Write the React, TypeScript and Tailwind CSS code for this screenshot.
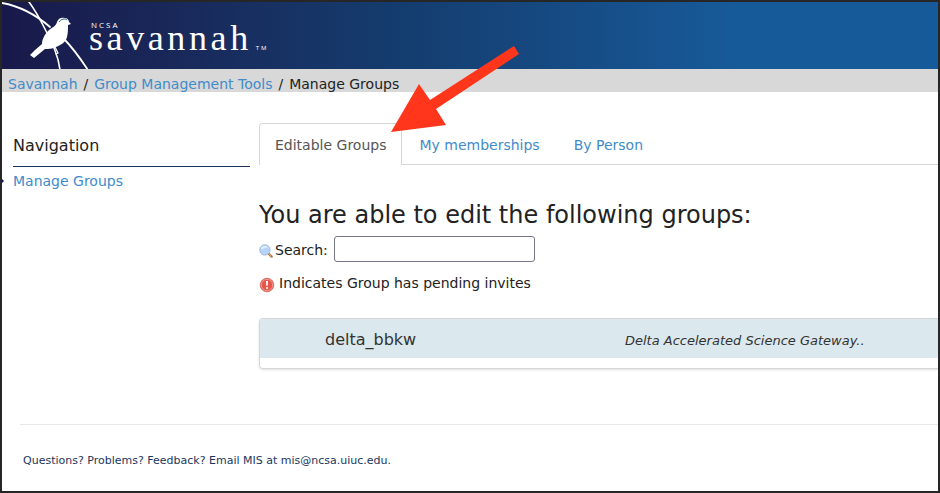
import React from "react";

function BirdLogo() {
  return (
    <svg viewBox="0 0 86 67" className="h-[67px] w-[86px] shrink-0" aria-hidden="true">
      <g fill="none" stroke="#fff" strokeLinecap="round">
        <path d="M0 1 C17 4 33 12 48 25" strokeWidth="1.8" />
        <path d="M62 37 C70 45 78 56 86 68" strokeWidth="1.8" />
        <path d="M27 0 C33 8 38 17 43 27 C50 41 56 52 58 68" strokeWidth="1.6" />
        <path d="M53 45 L56 51 L54 52" strokeWidth="1.2" />
      </g>
      <path
        d="M28 53 L33 48 L40 42 C40 37 43 32 47 28 C51 25 54 24 55 20 C56 16 60 15 63 16 C65 16 67 18 67 20 L69 22 L66 23 C66 27 66 31 65 35 C64 40 59 43 54 45 C50 47 46 47 43 47 L32 56 Z"
        fill="#fff"
      />
      <path d="M57 20 C59 17 63 16 65 18" fill="none" stroke="#2b6670" strokeWidth="1" />
    </svg>
  );
}

function MagnifierIcon() {
  return (
    <svg viewBox="0 0 14 14" className="mt-[3px] h-[14px] w-[14px]" aria-hidden="true">
      <path d="M10 10 L12.6 12.6" stroke="#b07c40" strokeWidth="2.4" strokeLinecap="round" />
      <path d="M10 10 L12.4 12" stroke="#e2b26c" strokeWidth="0.9" />
      <circle cx="5.9" cy="5.9" r="5.2" fill="#b5d4fa" stroke="#9db4dc" strokeWidth="0.9" />
      <path d="M2.3 5.7 A3.6 3.6 0 0 1 9 3.6 C6.5 4 4.5 4.7 2.3 5.7Z" fill="#e0eeff" />
    </svg>
  );
}

function AlertIcon() {
  return (
    <svg viewBox="0 0 16 16" className="mt-[3px] h-4 w-4" aria-hidden="true">
      <circle cx="8" cy="8" r="6.8" fill="#e4574a" stroke="#d3655b" strokeWidth="0.8" />
      <circle cx="8" cy="8" r="5.7" fill="none" stroke="#f3a79f" strokeWidth="0.8" />
      <path d="M7 4 h2 l-.3 4.8 h-1.4Z" fill="#fff" />
      <circle cx="8" cy="11" r="1" fill="#fff" />
    </svg>
  );
}

export default function App() {
  return (
    <div className="relative flex min-h-screen flex-col overflow-hidden border-2 border-[#262626] bg-white font-['DejaVu_Sans',Verdana,sans-serif] text-sm text-[#222]">
      <header className="flex h-[67px] items-start bg-linear-to-r from-[#18194a] from-0% via-[#143c6e] via-42% to-[#175a99] to-78%">
        <BirdLogo />
        <div className="flex flex-col pt-[19px] text-white">
          <span className="pl-[3px] font-['Open_Sans',sans-serif] text-[8px] leading-[8px] tracking-[2px]">NCSA</span>
          <div className="flex items-baseline">
            <span className="pl-px font-['Liberation_Serif',serif] text-[36px] leading-[18px] tracking-widest">savannah</span>
            <span className="ml-1 font-['Open_Sans',sans-serif] text-[6px] leading-[6px] tracking-[2px]">TM</span>
          </div>
        </div>
      </header>

      <nav aria-label="Breadcrumb" className="flex h-[23px] items-center gap-[6px] bg-[#d8d8d8] px-[6px] pt-[7px]">
        <a href="#home" className="text-[#428bca]">Savannah</a>
        <span>/</span>
        <a href="#tools" className="text-[#428bca]">Group Management Tools</a>
        <span>/</span>
        <span>Manage Groups</span>
      </nav>

      <div className="flex pt-[31px]">
        <aside className="w-[248px] shrink-0">
          <h2 className="ml-[11px] border-b border-[#1a365d] pt-[10px] pb-2 text-base leading-[25px]">Navigation</h2>
          <div className="flex items-center">
            <span className="h-0 w-0 border-y-2 border-l-2 border-y-transparent border-l-[#10106a]" />
            <a href="#groups" className="ml-[9px] leading-7 text-[#428bca]">Manage Groups</a>
          </div>
        </aside>

        <main className="ml-[9px] min-w-0 flex-1">
          <div role="tablist" className="flex border-b border-[#d6d6d6]">
            <button role="tab" aria-selected="true" className="-mb-px h-[42px] rounded-t border border-b-0 border-[#d6d6d6] bg-white px-[15px] text-[#555]">Editable Groups</button>
            <button role="tab" aria-selected="false" className="h-[41px] px-[17px] pt-[2px] text-[#428bca]">My memberships</button>
            <button role="tab" aria-selected="false" className="h-[41px] px-[17px] pt-[2px] text-[#428bca]">By Person</button>
          </div>

          <h1 className="pt-[34px] text-2xl leading-[32px]">You are able to edit the following groups:</h1>
          <div className="flex items-center pt-[5px]">
            <MagnifierIcon />
            <label htmlFor="search" className="ml-[2px] pt-[2px]">Search:</label>
            <input id="search" type="text" className="ml-[6px] h-[26px] w-[201px] rounded-[3px] border border-[#76768a] px-2" />
          </div>
          <p className="flex items-center gap-1 pt-[11px] leading-5">
            <AlertIcon />
            Indicates Group has pending invites
          </p>

          <section className="mt-[25px] rounded-l border border-r-0 border-[#d6d6d6] pb-[10px] shadow-sm">
            <div className="flex h-[39px] items-center bg-[#dbe8ed] pl-[65px] text-[#333]">
              <div className="w-[300px] shrink-0 pt-[2px] text-base">delta_bbkw</div>
              <div className="pt-[5px] text-[13px] italic whitespace-nowrap">Delta Accelerated Science Gateway..</div>
            </div>
          </section>
        </main>
      </div>

      <footer className="mt-[55px] ml-[18px] border-t border-[#e8e8e8] pt-7 pl-[3px] text-[11px] leading-4 text-[#1a365d]">
        Questions? Problems? Feedback? Email MIS at mis@ncsa.uiuc.edu.
      </footer>

      <svg viewBox="0 0 128 87" className="pointer-events-none absolute top-[43px] left-[389px] h-[87px] w-[128px]" aria-hidden="true">
        <path d="M0 87 L28 39 L39 55 L123 1 L128 9 L45 64 L55 80 Z" fill="#ff351c" />
      </svg>
    </div>
  );
}
